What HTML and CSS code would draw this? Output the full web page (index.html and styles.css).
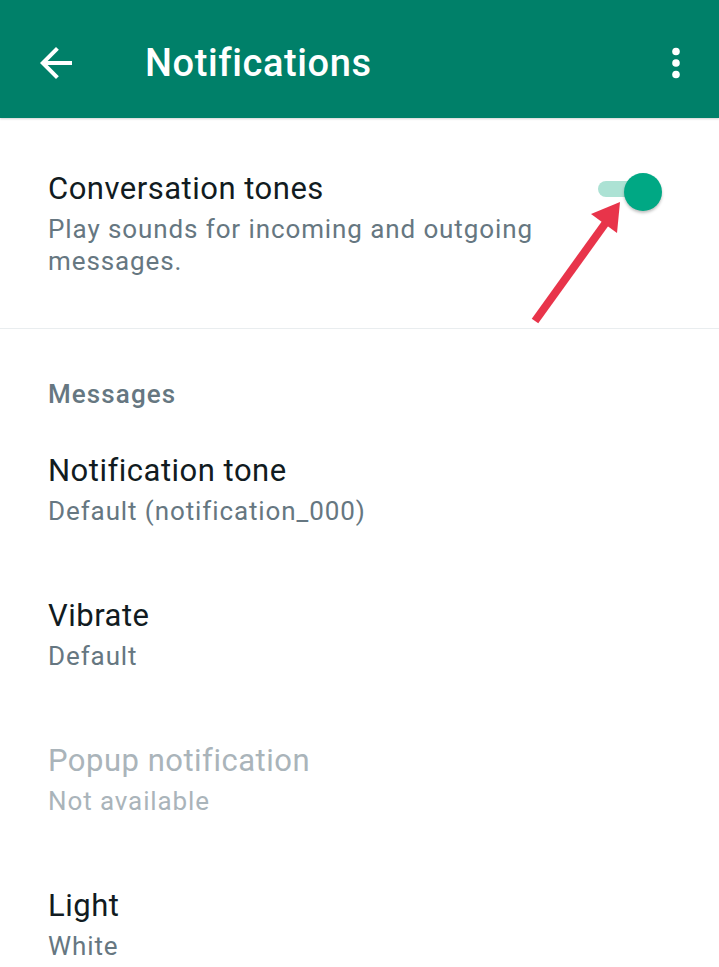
FILE: index.html
```html
<!DOCTYPE html>
<html lang="en">

<head>
    <meta charset="UTF-8">
    <meta name="viewport" content="width=device-width, initial-scale=1.0">
    <title>Notifications</title>
    <link rel="stylesheet" href="styles.css">
</head>

<body>
    <div class="app-bar">
        <svg class="back-icon" viewBox="4 4 16 16" width="32" height="32">
            <path d="M20 11H7.83l5.59-5.59L12 4l-8 8 8 8 1.41-1.41L7.83 13H20v-2z" fill="#fff" />
        </svg>
        <h1>Notifications</h1>
        <svg class="menu-icon" viewBox="0 0 8 32" width="8" height="32">
            <circle cx="4" cy="4.5" r="3.8" fill="#fff" />
            <circle cx="4" cy="16" r="3.8" fill="#fff" />
            <circle cx="4" cy="27.5" r="3.8" fill="#fff" />
        </svg>
    </div>

    <div class="toggle-section">
        <div class="setting-text">
            <div class="setting-title">Conversation tones</div>
            <div class="setting-sub">Play sounds for incoming and outgoing messages.</div>
        </div>
        <div class="switch">
            <span class="switch-track"></span>
            <span class="switch-thumb"></span>
        </div>
        <!-- red annotation arrow pointing at the switch -->
        <svg class="pointer" viewBox="0 0 110 130" width="110" height="130">
            <line x1="15" y1="123" x2="87" y2="23" stroke="#e8344a" stroke-width="8" />
            <polygon points="100,4 71,16 97,35" fill="#e8344a" />
        </svg>
    </div>

    <div class="section-label">Messages</div>

    <div class="setting-row">
        <div class="setting-title">Notification tone</div>
        <div class="setting-sub">Default (notification_000)</div>
    </div>
    <div class="setting-row">
        <div class="setting-title">Vibrate</div>
        <div class="setting-sub">Default</div>
    </div>
    <div class="setting-row disabled">
        <div class="setting-title">Popup notification</div>
        <div class="setting-sub">Not available</div>
    </div>
    <div class="setting-row">
        <div class="setting-title">Light</div>
        <div class="setting-sub">White</div>
    </div>
</body>

</html>
```

FILE: styles.css
```css
body {
    font-family: Roboto, "Noto Sans", sans-serif;
    margin: 0;
    padding: 0;
    background-color: #fff;
    overflow: hidden;
}

.app-bar {
    display: flex;
    align-items: center;
    box-sizing: border-box;
    height: 118px;
    padding: 8px 39px 0 40px;
    background-color: #008069;
    box-shadow: 0 1px 2px rgba(0, 0, 0, 0.18);
    position: relative;
    z-index: 1;
}

.app-bar h1 {
    flex-grow: 1;
    margin: 0 0 0 73px;
    font-size: 38px;
    font-weight: 500;
    line-height: 38px;
    letter-spacing: 0.6px;
    color: #fff;
}

.back-icon,
.menu-icon {
    flex-shrink: 0;
}

.toggle-section {
    display: flex;
    align-items: flex-start;
    position: relative;
    padding: 52px 56px 51px 48px;
    border-bottom: 1px solid #e9edef;
}

.toggle-section .setting-text {
    flex-grow: 1;
    margin-right: 20px;
}

.setting-title {
    font-size: 31px;
    line-height: 38px;
    letter-spacing: 0.5px;
    color: #111b21;
}

.setting-sub {
    margin-top: 5px;
    font-size: 26px;
    line-height: 32px;
    letter-spacing: 0.9px;
    color: #667781;
}

.switch {
    position: relative;
    flex-shrink: 0;
    width: 65px;
    height: 40px;
    margin-top: 2px;
}

.switch-track {
    position: absolute;
    left: 0;
    top: 9px;
    width: 58px;
    height: 16px;
    border-radius: 8px;
    background-color: #ace2d4;
}

.switch-thumb {
    position: absolute;
    left: 26px;
    top: 1px;
    width: 38px;
    height: 38px;
    border-radius: 50%;
    background-color: #00a884;
    box-shadow: 0 2px 3px rgba(0, 0, 0, 0.25);
}

.pointer {
    position: absolute;
    left: 520px;
    top: 80px;
}

.section-label {
    padding: 49px 48px 7px;
    font-size: 26px;
    font-weight: 500;
    line-height: 32px;
    letter-spacing: 1.1px;
    color: #667781;
}

.setting-row {
    padding: 35px 48px;
}

.setting-row.disabled .setting-title,
.setting-row.disabled .setting-sub {
    color: #aab4ba;
}
```
